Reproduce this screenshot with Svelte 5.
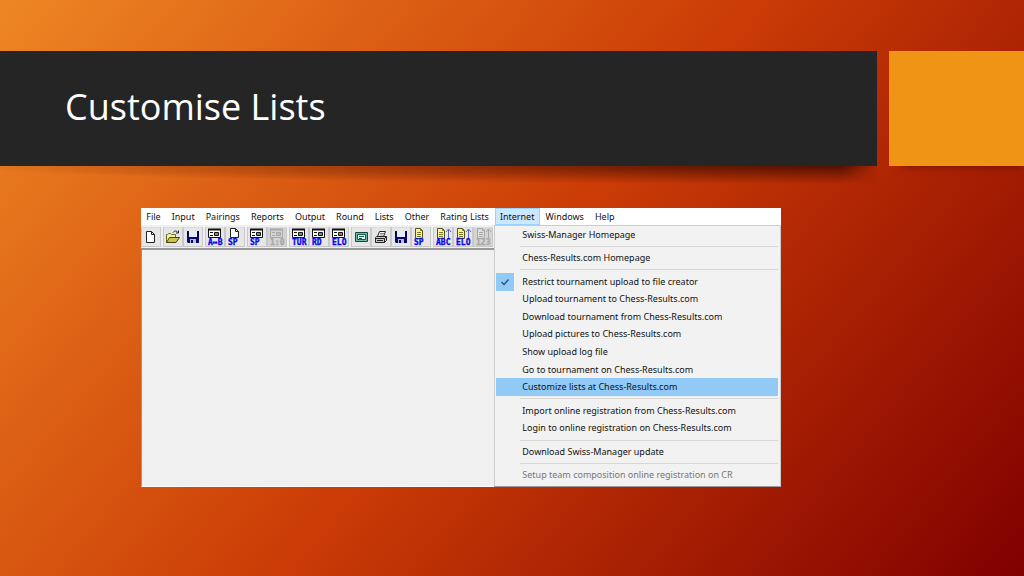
<script lang="ts">
  type Tool = { icon: string; title: string; label?: string; disabled?: boolean };

  const menus = [
    'File',
    'Input',
    'Pairings',
    'Reports',
    'Output',
    'Round',
    'Lists',
    'Other',
    'Rating Lists',
    'Internet',
    'Windows',
    'Help'
  ];

  const toolGroups: Tool[][] = [
    [{ icon: 'page', title: 'New' }],
    [
      { icon: 'folder', title: 'Open' },
      { icon: 'disk', title: 'Save' }
    ],
    [
      { icon: 'form', title: 'Pairings', label: 'A↔B' },
      { icon: 'sheet', title: 'Players', label: 'SP' }
    ],
    [
      { icon: 'form', title: 'Player input', label: 'SP' },
      { icon: 'form', title: 'Results', label: '1:0', disabled: true }
    ],
    [
      { icon: 'form', title: 'Tournament', label: 'TUR' },
      { icon: 'form', title: 'Rounds', label: 'RD' },
      { icon: 'form', title: 'Elo', label: 'ELO' }
    ],
    [
      { icon: 'screen', title: 'Preview' },
      { icon: 'printer', title: 'Print' },
      { icon: 'disk', title: 'Save list' },
      { icon: 'list', title: 'Player list', label: 'SP' }
    ],
    [
      { icon: 'sort', title: 'Alphabetical list', label: 'ABC' },
      { icon: 'sort', title: 'Rating list', label: 'ELO' },
      { icon: 'sort', title: 'Ranking list', label: '123', disabled: true }
    ]
  ];

  const sections = [
    ['Swiss-Manager Homepage'],
    ['Chess-Results.com Homepage'],
    [
      'Restrict tournament upload to file creator',
      'Upload tournament to Chess-Results.com',
      'Download tournament from Chess-Results.com',
      'Upload pictures to Chess-Results.com',
      'Show upload log file',
      'Go to tournament on Chess-Results.com',
      'Customize lists at Chess-Results.com'
    ],
    [
      'Import online registration from Chess-Results.com',
      'Login to online registration on Chess-Results.com'
    ],
    ['Download Swiss-Manager update'],
    ['Setup team composition online registration on CR']
  ];

  const checked = 'Restrict tournament upload to file creator';
  const unavailable = 'Setup team composition online registration on CR';

  let openMenu = $state('Internet');
  let selected = $state('Customize lists at Chess-Results.com');
</script>

{#snippet toolIcon(tool: Tool)}
  {@const ink = tool.disabled ? '#a8a8a8' : '#111'}
  {@const blue = tool.disabled ? '#a8a8a8' : '#0808e8'}
  <svg width="18" height="18" viewBox="0 0 18 18" aria-hidden="true">
    {#if tool.icon === 'page'}
      <path d="M4.5 3.5h5l3 3v8h-8z" fill="#fff" stroke="#222" />
      <path d="M9.5 3.5v3h3" fill="none" stroke="#222" />
    {:else if tool.icon === 'folder'}
      <path d="M2.5 14.5v-8h1l1-1h2l1 1h4v3" fill="#f4f09a" stroke="#6a6a20" />
      <path d="M2.5 14.5l3-5h10l-3.5 5z" fill="#c9c44c" stroke="#444410" />
      <path d="M9 4.5c1.5-2 3.500-2 5 0M14.500 2.500v2.500h-2.500" fill="none" stroke="#222" />
    {:else if tool.icon === 'disk'}
      <path d="M3 3h12v12H4l-1-1z" fill="#08086a" />
      <path d="M5 3h8v6H5z" fill="#e8eef8" />
      <path d="M6 11h6v4H6z" fill="#b8c0d0" />
      <path d="M7 12h2v3H7z" fill="#08086a" />
    {:else if tool.icon === 'screen'}
      <path d="M3.500 4.500h12v9h-12z" fill="#73b9ac" stroke="#17463f" />
      <path d="M5.500 6.500h8v5h-8z" fill="#d8f4e8" stroke="#185c50" />
      <path d="M7 8.500h5M7 10.500h3" stroke="#185c50" />
    {:else if tool.icon === 'printer'}
      <path d="M5.500 8.500l2-5h6l-2 5" fill="#fff" stroke="#222" />
      <path d="M8 5.500h4M7.500 7h4" stroke="#888" />
      <path d="M3.500 9.500l1-1h10v4l-2 2h-9z" fill="#c9c9b8" stroke="#222" />
      <path d="M3.500 10.500h9v4M12.500 10.500l2-2M5 12.500h6" fill="none" stroke="#222" />
    {:else if tool.icon === 'form'}
      <path d="M2.500 1.500h12v8h-12z" fill={tool.disabled ? '#d4d4d4' : '#fff'} stroke={ink} />
      <path d="M2 1.500h13" stroke={ink} stroke-width="2" />
      <path d="M4 4.500h3M4 7.500h3M8.500 4.500h4v3h-4zM8.500 6h4" fill="none" stroke={ink} />
    {:else if tool.icon === 'sheet'}
      <path d="M4.500.500h5l3 3v6h-8z" fill="#fff" stroke="#222" />
      <path d="M9.500.500v3h3" fill="none" stroke="#222" />
    {:else}
      <path
        d="M3.500.500h5l2 2v8h-7z"
        fill={tool.disabled ? '#dcdcdc' : '#f5f59c'}
        stroke={tool.disabled ? '#a8a8a8' : '#55551a'}
      />
      <path
        d="M8.500.500v2h2M5 4.500h4M5 6.500h4M5 8.500h4"
        fill="none"
        stroke={tool.disabled ? '#a8a8a8' : '#77772a'}
      />
      {#if tool.icon === 'sort'}
        <path d="M14.500 10V1M12 4l2.500-3 2.500 3" fill="none" stroke={tool.disabled ? '#a8a8a8' : '#6060e0'} />
      {/if}
    {/if}
    {#if tool.label}
      <text x="2" y="17" fill={blue} stroke={blue} stroke-width=".3">{tool.label}</text>
    {/if}
  </svg>
{/snippet}

<main class="slide">
  <header>
    <div class="band"><h1>Customise Lists</h1></div>
    <div class="accent"></div>
  </header>

  <section class="window">
    <nav class="menubar">
      {#each menus as menu}
        <button class:open={openMenu === menu} onclick={() => (openMenu = menu)}>{menu}</button>
      {/each}
    </nav>

    <div class="toolbar">
      {#each toolGroups as group}
        <div class="group">
          {#each group as tool}
            <button class:off={tool.disabled} disabled={tool.disabled} aria-label={tool.title}>
              {@render toolIcon(tool)}
            </button>
          {/each}
        </div>
      {/each}
    </div>

    <div class="workspace"></div>

    {#if openMenu === 'Internet'}
      <div class="dropdown" role="menu">
        {#each sections as section, i}
          {#if i > 0}
            <div class="separator" role="separator"></div>
          {/if}
          {#each section as item}
            <button
              class="item"
              class:selected={selected === item}
              role="menuitem"
              disabled={item === unavailable}
              onclick={() => (selected = item)}
            >
              <span class="mark" class:checked={item === checked}>
                {#if item === checked}
                  <svg width="10" height="8" viewBox="0 0 10 8" aria-hidden="true">
                    <path d="M1.500 4l2.500 2.500L8.500 1.500" fill="none" stroke="#245080" stroke-width="1.300" />
                  </svg>
                {/if}
              </span>
              <span>{item}</span>
            </button>
          {/each}
        {/each}
      </div>
    {/if}
  </section>
</main>

<style>
  :global(body) {
    margin: 0;
  }

  .slide {
    box-sizing: border-box;
    min-height: 100vh;
    padding: 51px 0 89px;
    background: linear-gradient(130deg, #ee8624 0%, #cb3c06 50%, #800000 100%);
    font-family: 'Open Sans', 'Noto Sans', sans-serif;
  }

  header {
    display: flex;
    gap: 12px;
    height: 115px;
  }

  .band {
    position: relative;
    flex: 1;
    display: flex;
    align-items: center;
    box-sizing: border-box;
    padding: 0 0 4px 65px;
    background: #252525;
  }

  /* shadow under the band, fading out to the left */
  .band::after {
    content: '';
    position: absolute;
    top: 100%;
    left: 0;
    right: 0;
    height: 18px;
    background: radial-gradient(ellipse 100% 100% at 96% 0, rgba(50, 8, 0, 0.75), rgba(50, 8, 0, 0.35) 50%, transparent);
    -webkit-mask-image: linear-gradient(to right, #000 96%, transparent 100%);
    mask-image: linear-gradient(to right, #000 96%, transparent 100%);
  }

  .accent {
    flex: 0 0 135px;
    background: #f09415;
    box-shadow: 6px 8px 8px -8px rgba(60, 0, 0, 0.6);
  }

  h1 {
    margin: 0;
    color: #fff;
    font-family: 'Trebuchet MS', 'Open Sans', sans-serif;
    font-size: 36px;
    font-weight: 400;
    line-height: 48px;
  }

  button {
    margin: 0;
    padding: 0;
    border: 0;
    background: none;
    font: inherit;
    color: inherit;
  }

  .window {
    position: relative;
    width: 62.5%;
    margin: 42px 0 0 13.8%;
    background: #f0f0f0;
    color: #111;
    font-family: 'Noto Sans', 'Open Sans', sans-serif;
    font-size: 9px;
  }

  .menubar {
    display: flex;
    height: 17px;
    background: #fff;
  }

  .menubar button {
    padding: 0 5px 0 4px;
    border: 1px solid transparent;
    line-height: 15px;
    white-space: nowrap;
  }

  .menubar .open {
    border-color: #99d1ff;
    background: #cce8ff;
  }

  .toolbar {
    display: flex;
    gap: 2px;
    padding: 2px 0 1px;
  }

  .group {
    display: flex;
  }

  .toolbar button {
    box-sizing: border-box;
    width: 20px;
    height: 20px;
    border: 1px solid #c8c8c8;
    border-top-color: #dcdcdc;
    background: #e6e6e6;
  }

  .toolbar .off {
    background: #d4d4d4;
  }

  .toolbar svg {
    display: block;
  }

  text {
    font-family: 'DejaVu Sans Mono', monospace;
    font-size: 8px;
    font-weight: 700;
  }

  .workspace {
    height: 236px;
    border-top: 2px solid #999;
    border-left: 1px solid #999;
    border-right: 1px solid #999;
    border-bottom: 1px solid #fff;
  }

  .dropdown {
    position: absolute;
    top: 17px;
    right: 0;
    bottom: 0;
    box-sizing: border-box;
    display: flex;
    flex-direction: column;
    width: 287px;
    padding: 0 2px 2px 1px;
    border: 1px solid #ccc;
    border-bottom-color: #999;
    background: #f2f2f2;
  }

  .item {
    flex: 3 1 0;
    display: flex;
    align-items: center;
    min-height: 0;
    line-height: 16px;
    text-align: left;
    white-space: nowrap;
  }

  .item:disabled {
    color: #777;
  }

  .selected {
    background: #91c9f7;
  }

  .mark {
    display: flex;
    align-self: stretch;
    align-items: center;
    justify-content: center;
    width: 18px;
    margin-right: 8px;
  }

  .checked {
    background: #91c9f7;
  }

  .separator {
    flex: 1 1 0;
    display: flex;
    align-items: center;
    margin-left: 24px;
  }

  .separator::before {
    content: '';
    flex: 1;
    height: 1px;
    background: #d7d7d7;
  }
</style>
